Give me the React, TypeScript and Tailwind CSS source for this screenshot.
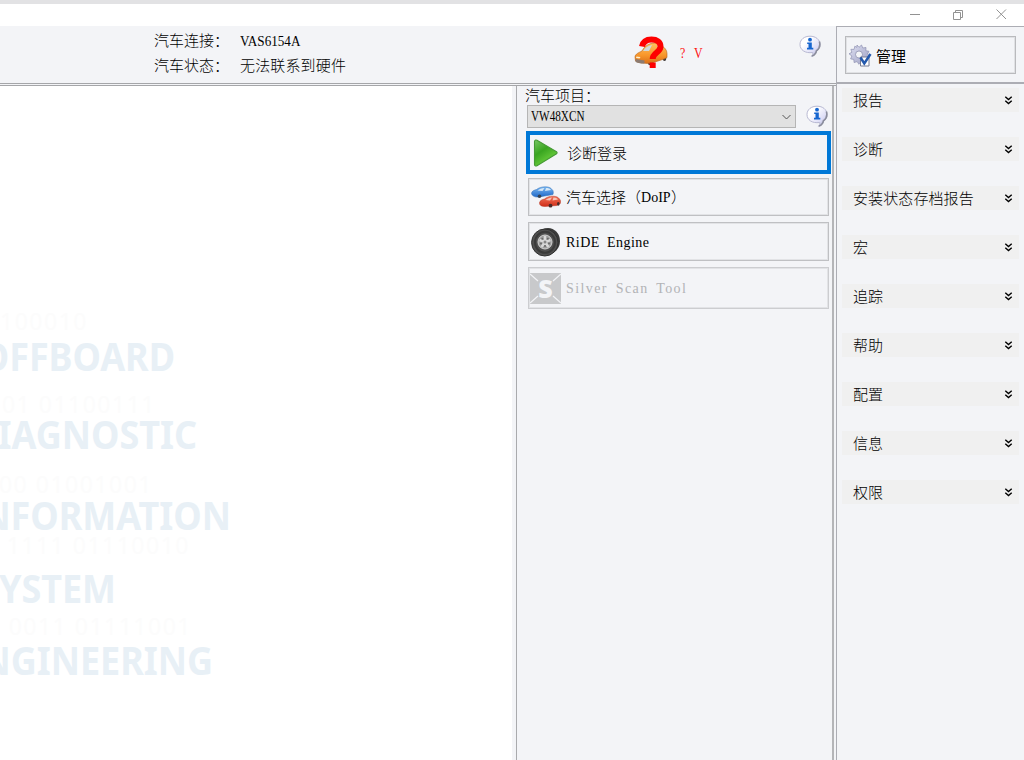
import type { ReactNode } from 'react';
import { clsx } from 'clsx';

const menuItems = ['报告', '诊断', '安装状态存档报告', '宏', '追踪', '帮助', '配置', '信息', '权限'];

// faint slogan on the start page, each word is cut off by the left window edge
const slogan = [
  { word: 'OFFBOARD', row: 'w-[175px] mt-[9px]', above: '100010', aboveRow: 'w-[88px]' },
  { word: 'DIAGNOSTIC', row: 'w-[197px] mt-[4px]', above: '01 01100111', aboveRow: 'w-[156px] mt-[20px]' },
  { word: 'INFORMATION', row: 'w-[231px] mt-[5px]', above: '00 01001001', aboveRow: 'w-[153px] mt-[22px]' },
  { word: 'SYSTEM', row: 'w-[116px] mt-[17px]', above: '1111 01110010', aboveRow: 'w-[190px] mt-[2px]' },
  { word: 'ENGINEERING', row: 'w-[213px] mt-[8px]', above: '0011 01111001', aboveRow: 'w-[192px] mt-[10px]' },
];

function Latin({ children, className }: { children: ReactNode; className?: string }) {
  return (
    <span
      className={clsx(
        "inline-block origin-left whitespace-pre font-['Liberation_Serif',serif] text-[14px] font-normal",
        className
      )}
    >
      {children}
    </span>
  );
}

function InfoIcon() {
  return (
    <svg className="h-[23px] w-[23px] shrink-0" viewBox="0 0 23 23">
      <defs>
        <linearGradient id="bubble" x1="0" y1="0" x2="1" y2="1">
          <stop offset="0.3" stopColor="#ffffff" />
          <stop offset="0.7" stopColor="#dcdcf6" />
          <stop offset="1" stopColor="#9da0bd" />
        </linearGradient>
      </defs>
      <path
        d="M11 1.200c5.700 0 10 3.300 10 8.300 0 3-1.300 5.200-3.400 6.700-.2 2.200-2.200 4.300-5.200 5.200 1.200-1.300 1.600-2.500 1.300-3.900C6 18.600 1 14.800 1 9.500 1 4.500 5.300 1.200 11 1.200z"
        fill="url(#bubble)"
        stroke="#b7b8d2"
      />
      <path d="M20.400 6.500c1.100 3.800-.2 7.300-3 9.300-.4 2.300-2 4.300-4.500 5.300" fill="none" stroke="#8b8d9c" strokeWidth="1.600" />
      <circle cx="11" cy="4.700" r="1.900" fill="#1766cf" />
      <path d="M8.200 7.400h4.600v5.400h1.500v1.700H8v-1.700h1.500V9.100H8.200z" fill="#1766cf" />
    </svg>
  );
}

function CarQuestionIcon() {
  return (
    <svg className="h-[34px] w-[34px]" viewBox="0 0 34 34">
      <defs>
        <linearGradient id="taxi" x1="0" y1="0" x2="0" y2="1">
          <stop stopColor="#ffc060" />
          <stop offset=".6" stopColor="#f8962a" />
          <stop offset="1" stopColor="#d9701a" />
        </linearGradient>
      </defs>
      <ellipse cx="16.500" cy="26.500" rx="2.800" ry="2.800" fill="#403b3b" />
      <ellipse cx="30.500" cy="21.500" rx="1.800" ry="3.500" fill="#403b3b" />
      <path d="M1 21c0-3 4-4.500 7-6 2-4 5-6.500 9-7.500 5-1 9-.5 11 2.500 2.500 1.500 5 4 5 7.500v4l-3 1.500-12 4c-6 1-14 0-16.500-2z" fill="url(#taxi)" stroke="#b5651d" strokeWidth=".6" />
      <path d="M9 15c2-3.500 5-5.500 9-6l-3 6zM23 9c3-.5 5 .5 6.500 3.500L23 15z" fill="#cfd9dd" />
      <path d="M1.500 23l9 1.500v3c-4 0-8-.5-9-2z" fill="#8d7b70" />
      <path d="M2.500 20.500l4 .5-1 1.500-3.500-.5z" fill="#fff1d0" />
      <path d="M8 10.500C9 5.500 12.500 3.400 17.500 3.400c5.500 0 9 2.600 9 7.100 0 6-7.800 6-7.800 12.500" fill="none" stroke="#fe0000" strokeWidth="6" />
      <path d="M15.700 26.500h6v5.500h-6z" fill="#fe0000" />
    </svg>
  );
}

function GearIcon() {
  return (
    <svg className="h-[23px] w-[24px] shrink-0" viewBox="0 0 24 23">
      <defs>
        <linearGradient id="gear" x1="0" y1="0" x2="1" y2="1">
          <stop stopColor="#dfe0f2" />
          <stop offset="1" stopColor="#9c9fc2" />
        </linearGradient>
      </defs>
      <path
        d="M9 1l2 2.300L13.500 1l1.300 3L18 3.500l-.2 3.200 3.200.6-1.500 2.700 2.200 2-2.800 1.500 1 3-3.300-.1-.6 3.100-2.800-1.500-2.300 2.300-1.800-2.700-3 1-.3-3.200-3.200-.5 1.300-2.900L1 9.800l2.900-1.500-1-3 3.200.1L6.800 2.200l2 1.200z"
        fill="url(#gear)"
        stroke="#8c8fb0"
        strokeWidth=".7"
      />
      <circle cx="11" cy="10.500" r="3.500" fill="#f3f4f7" stroke="#8487a8" strokeWidth=".7" />
      <path d="M12.500 13h8.500v9h-8.500z" fill="#fff" stroke="#777b91" />
      <path d="M12.500 13.500l3.800 6L22.500 10" fill="none" stroke="#2459ad" strokeWidth="2.500" />
    </svg>
  );
}

function PlayIcon() {
  return (
    <svg className="h-[28px] w-[28px] shrink-0" viewBox="0 0 28 28">
      <defs>
        <linearGradient id="play" x1="0" y1="0" x2=".6" y2="1">
          <stop stopColor="#78c765" />
          <stop offset=".45" stopColor="#39a520" />
          <stop offset="1" stopColor="#77d844" />
        </linearGradient>
      </defs>
      <path d="M1.500 2.500Q1.700.4 4 1.300L23.500 12.700Q24.700 13.700 23.500 14.800L4 26.700Q1.700 27.600 1.500 25.500z" fill="url(#play)" stroke="#459a35" strokeWidth="1.100" />
    </svg>
  );
}

function CarsIcon() {
  return (
    <svg className="h-[28px] w-[30px] shrink-0" viewBox="0 0 30 28">
      <defs>
        <linearGradient id="blueCar" x1="0" y1="0" x2="0" y2="1">
          <stop stopColor="#7ab8f2" />
          <stop offset="1" stopColor="#1f68c8" />
        </linearGradient>
        <linearGradient id="redCar" x1="0" y1="0" x2="0" y2="1">
          <stop stopColor="#f4745a" />
          <stop offset="1" stopColor="#cf2d18" />
        </linearGradient>
      </defs>
      <path d="M.5 10.500c0-2.500 3-3.500 5-4 2.500-1.800 5-2.700 9-2.700 3.500 0 5.500 1.200 6.500 2.700 1.500 1 1.500 3 1 5L8 14c-4 .5-7-1-7.500-3.500z" fill="url(#blueCar)" stroke="#2f6cb5" strokeWidth=".5" />
      <path d="M6.500 7.500c2-1.500 4-2.200 7-2.400l-2 3zM15 5.100c2.500 0 4 .6 5 2l-6 1z" fill="#d6e7f5" />
      <circle cx="8.500" cy="13.300" r="1.800" fill="#354251" />
      <path d="M8.500 20c0-2.500 3-3.500 5-4 2.500-2 5-2.800 8.500-2.800 3.500 0 5.500 1.300 6.500 2.800 1.200 1 1.300 3 .8 4.500l-3.500 2L14 23.500c-3.500 0-5.500-1-5.500-3.500z" fill="url(#redCar)" stroke="#b53520" strokeWidth=".5" />
      <path d="M14.500 17c2-1.500 4-2.400 6.500-2.600l-2 3zM22.500 14.400c2.200 0 3.700.8 4.500 2l-5.500 1z" fill="#f7c3b3" />
      <circle cx="19.500" cy="22.700" r="1.900" fill="#4a2a29" />
      <ellipse cx="27.300" cy="20.800" rx="1.300" ry="1.900" fill="#4a2a29" />
    </svg>
  );
}

function TireIcon() {
  return (
    <svg className="h-[30px] w-[30px] shrink-0" viewBox="0 0 30 30">
      <ellipse cx="17" cy="14" rx="12" ry="13" fill="#3a3a3a" />
      <ellipse cx="13.800" cy="15.500" rx="13.200" ry="13.500" fill="#505050" stroke="#303030" />
      <ellipse cx="14" cy="15.300" rx="10" ry="10.500" fill="none" stroke="#3a3a3a" strokeWidth="2" />
      <circle cx="14" cy="15" r="7" fill="#9e9e9e" stroke="#d6d6d6" />
      <path d="M14 15V9M14 15l5.500-2M14 15l3.500 5M14 15l-3.500 5M14 15l-5.500-2" stroke="#d8d8d8" strokeWidth="2.400" />
      <g fill="#6a6a6a">
        <circle cx="11.300" cy="11.800" r="1" />
        <circle cx="16.800" cy="11.800" r="1" />
        <circle cx="18" cy="16.500" r="1" />
        <circle cx="14" cy="19" r="1" />
        <circle cx="10" cy="16.500" r="1" />
      </g>
      <circle cx="14" cy="15" r="1.500" fill="#888" />
    </svg>
  );
}

function ScanIcon() {
  return (
    <div className="relative flex h-[31px] w-[31px] shrink-0 items-center justify-center bg-[#c8c9cb]">
      <svg className="absolute inset-0 h-full w-full" viewBox="0 0 31 31">
        <path d="M0 1l8 7M31 1l-8 7M0 30l8-7M31 30l-8-7" stroke="#f3f4f7" strokeWidth="1.200" />
      </svg>
      <span className="relative font-['Open_Sans',sans-serif] text-[25px] leading-none font-extrabold text-[#f3f4f7]">S</span>
    </div>
  );
}

function ActionButton({ icon, children, className }: { icon: ReactNode; children: ReactNode; className?: string }) {
  return (
    <button
      className={clsx(
        'flex w-[301px] items-center border text-left text-[15px] shadow-[inset_0_0_0_1px_#e2e3e6]',
        className
      )}
    >
      {icon}
      {children}
    </button>
  );
}

export default function App() {
  return (
    <div className="flex h-[760px] w-[1024px] flex-col overflow-hidden bg-[#f3f4f7] font-['Noto_Sans_CJK_SC',sans-serif] text-[15px] leading-5 font-light text-black">
      {/* title bar */}
      <div className="flex h-[26px] shrink-0 items-center justify-end border-t-4 border-[#e2e2e4] bg-white pr-[17px]">
        <svg className="h-[12px] w-[98px]" viewBox="0 0 98 12" fill="none" stroke="#929292">
          <path d="M1 5.500h10" />
          <path d="M44.500 3.500h7v7h-7zM46.500 3.500v-2h7v7h-2" />
          <path d="M87.500 .5l9.500 9.500M97 .5L87.500 10" />
        </svg>
      </div>

      <div className="flex min-h-0 flex-1">
        <div className="flex w-[836px] flex-col">
          {/* connection status */}
          <header className="flex h-[58px] shrink-0 border-b border-[#a5a6a9]">
            <div className="grid h-[52px] w-[634px] grid-cols-[86px_auto] content-start pt-[2px] pl-[154px] leading-[23px]">
              <span>汽车连接：</span>
              <Latin className="scale-x-[0.94] pt-[2px]">VAS6154A</Latin>
              <span>汽车状态：</span>
              <span className="tracking-[0.15px]">无法联系到硬件</span>
            </div>
            <div className="pt-[10px]">
              <CarQuestionIcon />
            </div>
            <div className="flex-1 pt-[16px] pl-[12px]">
              <Latin className="scale-x-[0.85] text-[#fe1010] [word-spacing:7px]">? V</Latin>
            </div>
            <div className="pt-[9px] pr-[14px]">
              <InfoIcon />
            </div>
          </header>

          <div className="mt-px flex min-h-0 flex-1 border-t border-[#a5a6a9]">
            <main className="h-full w-[512px] overflow-hidden bg-white pt-[225px] font-['Noto_Sans',sans-serif]">
              {slogan.map(line => (
                <div key={line.word}>
                  <div className={clsx('flex h-[20px] items-center justify-end text-[23px] leading-none font-normal tracking-[1.5px] whitespace-nowrap text-[#fcfcfc]', line.aboveRow)}>
                    {line.above}
                  </div>
                  <div className={clsx('flex h-[34px] origin-right scale-x-[0.91] items-center justify-end text-[39.500px] leading-none font-bold whitespace-nowrap text-[#e8f0f6]', line.row)}>
                    {line.word}
                  </div>
                </div>
              ))}
            </main>

            {/* vehicle project panel */}
            <section className="ml-1 flex w-[318px] flex-col border-r-2 border-l border-r-[#b4b5b8] border-l-[#a9aaad] pl-[10px]">
              <div className="-ml-[2px] h-[19px] leading-[18px]">汽车项目：</div>
              <div className="flex h-[23px] items-center">
                <button className="flex h-[23px] w-[269px] shrink-0 items-center border border-[#b5b5b5] bg-[#e1e1e1] pr-[4px] pl-[3px]">
                  <Latin className="scale-x-[0.8]">VW48XCN</Latin>
                  <svg className="ml-auto h-[8px] w-[9px]" viewBox="0 0 9 8" fill="none" stroke="#555">
                    <path d="M.5 2l4 4 4-4" />
                  </svg>
                </button>
                <div className="ml-[10px]">
                  <InfoIcon />
                </div>
              </div>
              <button className="mt-[3px] -ml-px flex h-[43px] w-[305px] shrink-0 items-center border-4 border-[#0078d7] pl-[3px]">
                <PlayIcon />
                <span className="ml-[6px]">诊断登录</span>
              </button>
              <div className="mt-[4px] ml-px flex flex-col gap-[6px]">
                <ActionButton className="h-[38px] border-[#bfc0c3] pl-[2px]" icon={<CarsIcon />}>
                  <span className="ml-[5px]">汽车选择（</span>
                  <Latin className="w-[30px] pt-[2px]">DoIP</Latin>
                  <span>）</span>
                </ActionButton>
                <ActionButton className="h-[39px] border-[#bfc0c3] pl-[2px]" icon={<TireIcon />}>
                  <Latin className="ml-[5px] pt-[2px] tracking-[0.5px] [word-spacing:3px]">RiDE Engine</Latin>
                </ActionButton>
                <ActionButton className="h-[42px] border-[#cccdd0] pl-px text-[#b2b3b6]" icon={<ScanIcon />}>
                  <Latin className="ml-[5px] pt-[2px] tracking-[1.4px] [word-spacing:3px]">Silver Scan Tool</Latin>
                </ActionButton>
              </div>
            </section>
          </div>
        </div>

        <aside className="flex w-[188px] flex-col border-t border-l border-[#acadb4]">
          <div className="h-[57px] shrink-0 border-b-2 border-[#acadb4] pt-[9px] pl-[8px]">
            <button className="flex h-[38px] w-[171px] items-center border border-[#b9babd] pl-[2px] shadow-[inset_0_0_0_1px_#e0e1e4]">
              <GearIcon />
              <span className="ml-[4px] pt-[2px] font-normal">管理</span>
            </button>
          </div>
          <nav className="flex flex-col gap-[25px] pt-[4px] pl-[5px]">
            {menuItems.map(item => (
              <button key={item} className="flex h-[24px] w-[177px] items-center justify-between bg-[#f0f0f0] pr-[6px] pl-[11px]">
                <span className="tracking-[0.1px]">{item}</span>
                <svg className="h-[9px] w-[9px]" viewBox="0 0 9 9" fill="none" stroke="#000" strokeWidth="1.400">
                  <path d="M1.300 .7l3.200 2.800L7.700 .7M1.300 4.700l3.200 2.800 3.200-2.800" />
                </svg>
              </button>
            ))}
          </nav>
        </aside>
      </div>
    </div>
  );
}
